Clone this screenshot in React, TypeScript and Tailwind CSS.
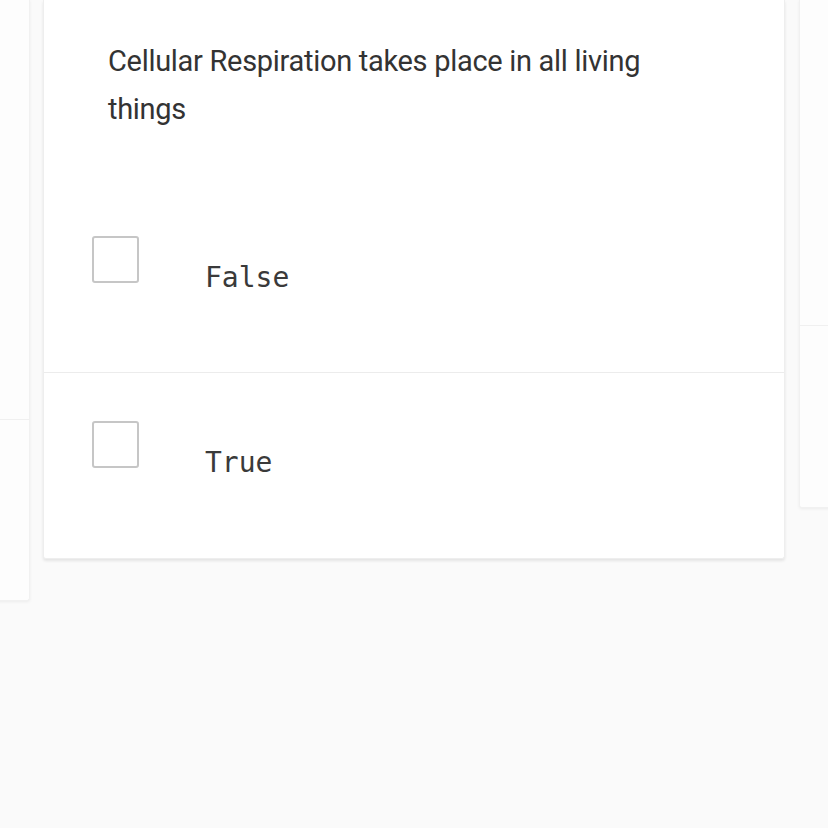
import React from "react";

const options = ["False", "True"];

function Checkbox() {
  return <span className="block size-[47px] shrink-0 rounded-[3px] border-2 border-[#c6c6c6] bg-white" />;
}

function OptionRow({ label, last }: { label: string; last?: boolean }) {
  return (
    <div className={`flex h-[185px] items-start pl-12 pt-12 ${last ? "" : "border-b border-[#ececec]"}`}>
      <Checkbox />
      <span className="ml-[66px] mt-[28px] font-['DejaVu_Sans_Mono',monospace] text-[28px] leading-none text-[#3a3a3a]">
        {label}
      </span>
    </div>
  );
}

function SideCard({ top, bottom, className }: { top: number; bottom: number; className: string }) {
  return (
    <div className={`flex w-[741px] shrink-0 flex-col rounded-b-[3px] border border-t-0 border-[#eeeeee] bg-white opacity-70 shadow-[0_1px_3px_rgba(0,0,0,0.08)] ${className}`}>
      <div className="border-b border-[#ececec]" style={{ height: top }} />
      <div style={{ height: bottom }} />
    </div>
  );
}

export default function App() {
  return (
    <div className="h-[828px] w-[828px] overflow-hidden bg-[#fafafa] font-['Roboto',sans-serif]">
      <div className="flex items-start gap-[13px]">
        <SideCard top={420} bottom={180} className="ml-[-711px]" />
        <div className="flex w-[742px] shrink-0 flex-col rounded-b-[3px] border border-t-0 border-[#eeeeee] bg-white shadow-[0_2px_3px_rgba(0,0,0,0.09)]">
          <div className="h-[188px] pl-[64px] pr-[140px] pt-[37px]">
            <p className="text-[29px] leading-[48px] tracking-[-0.3px] text-[#333]">
              Cellular Respiration takes place in all living things
            </p>
          </div>
          {options.map((o, i) => (
            <OptionRow key={o} label={o} last={i === options.length - 1} />
          ))}
        </div>
        <SideCard top={326} bottom={181} className="ml-px" />
      </div>
    </div>
  );
}
